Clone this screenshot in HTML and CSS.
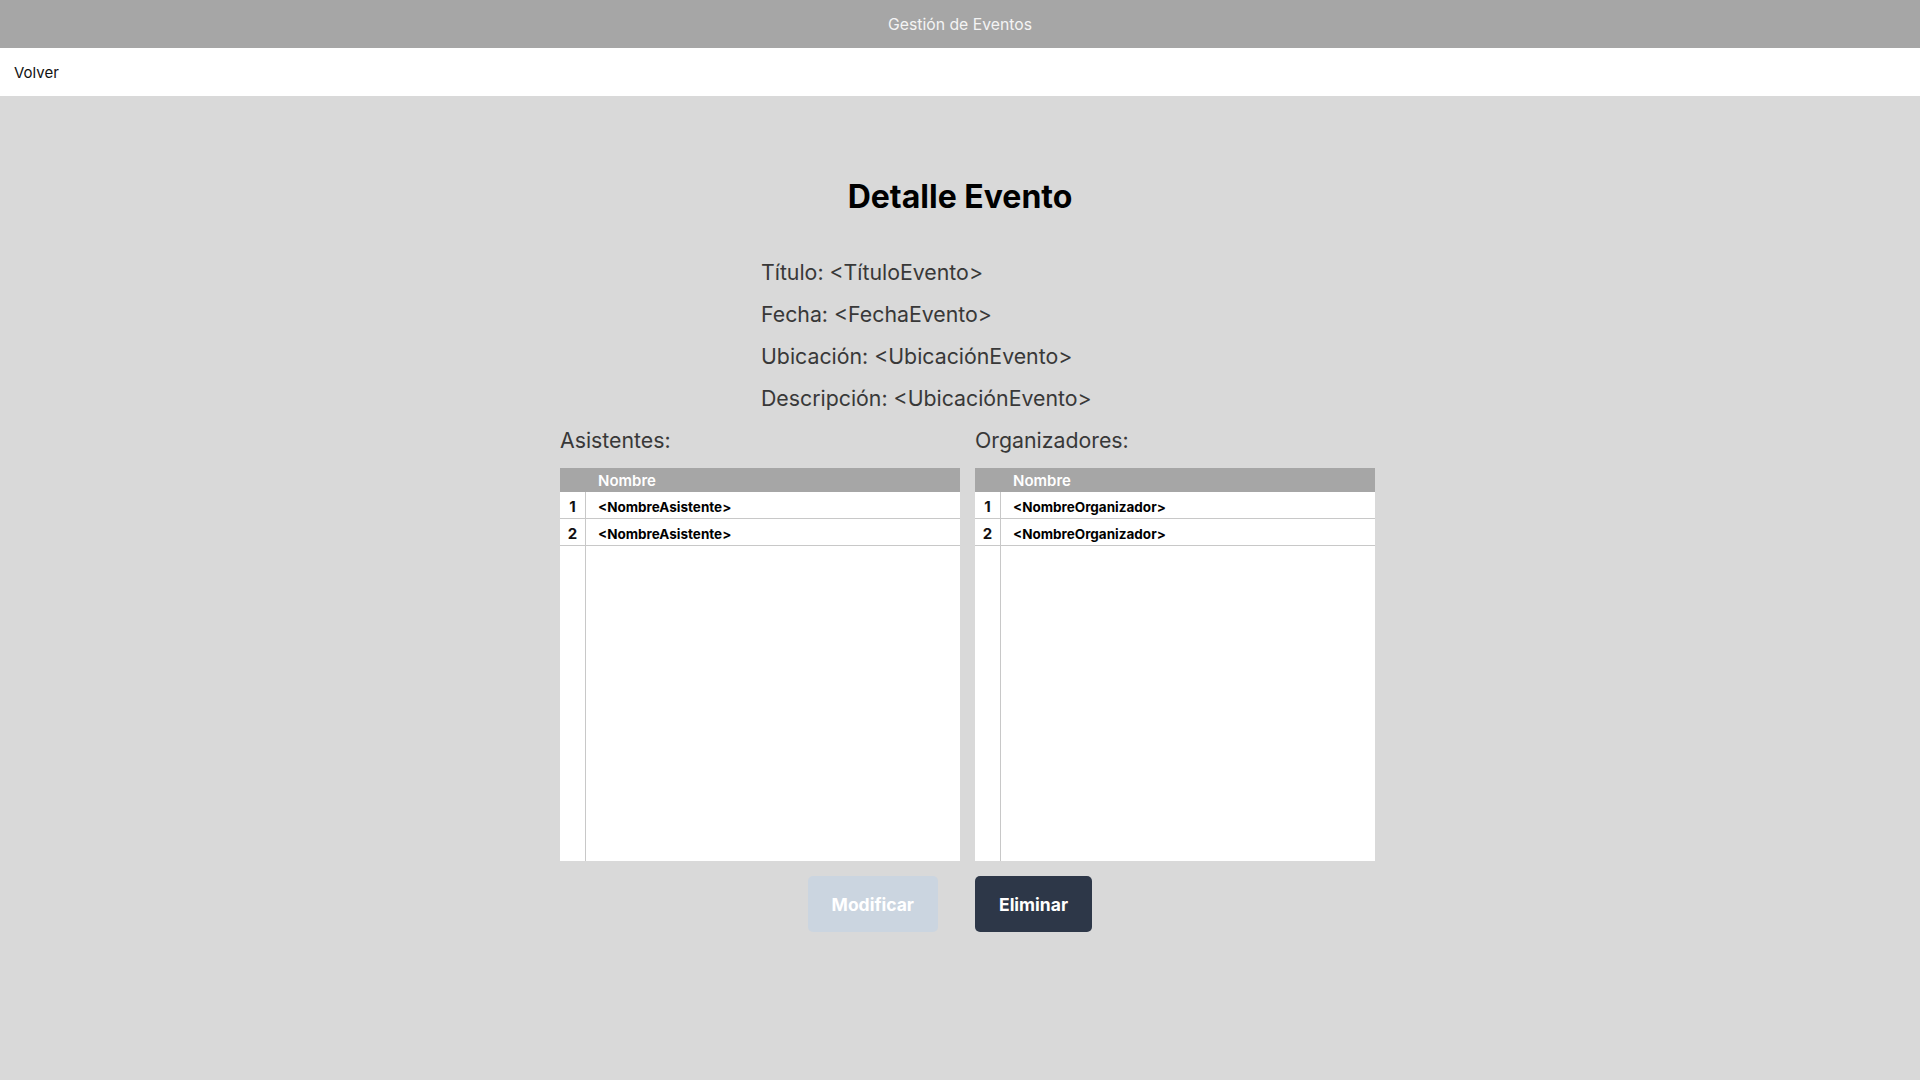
FILE: index.html
```html
<!DOCTYPE html>
<html lang="es">
<head>
<meta charset="utf-8">
<title>Gestión de Eventos</title>
<link rel="stylesheet" href="styles.css">
</head>
<body>
<header class="topbar">Gestión de Eventos</header>
<nav class="navbar"><a class="back" href="#">Volver</a></nav>
<main class="main">
  <h1 class="title">Detalle Evento</h1>
  <div class="content">
    <div class="info">
      <p class="line">Título: &lt;TítuloEvento&gt;</p>
      <p class="line">Fecha: &lt;FechaEvento&gt;</p>
      <p class="line">Ubicación: &lt;UbicaciónEvento&gt;</p>
      <p class="line">Descripción: &lt;UbicaciónEvento&gt;</p>
    </div>
    <div class="columns">
      <section class="col">
        <p class="line">Asistentes:</p>
        <div class="grid">
          <div class="row head"><div class="num"></div><div class="name">Nombre</div></div>
          <div class="row"><div class="num">1</div><div class="name">&lt;NombreAsistente&gt;</div></div>
          <div class="row"><div class="num">2</div><div class="name">&lt;NombreAsistente&gt;</div></div>
          <div class="row filler"><div class="num"></div><div class="name"></div></div>
        </div>
      </section>
      <section class="col">
        <p class="line">Organizadores:</p>
        <div class="grid">
          <div class="row head"><div class="num"></div><div class="name">Nombre</div></div>
          <div class="row"><div class="num">1</div><div class="name">&lt;NombreOrganizador&gt;</div></div>
          <div class="row"><div class="num">2</div><div class="name">&lt;NombreOrganizador&gt;</div></div>
          <div class="row filler"><div class="num"></div><div class="name"></div></div>
        </div>
      </section>
    </div>
    <div class="actions">
      <div class="act left"><button class="btn btn-disabled" disabled>Modificar</button></div>
      <div class="act right"><button class="btn btn-dark">Eliminar</button></div>
    </div>
  </div>
</main>
</body>
</html>
```
FILE: styles.css
```css
* { box-sizing: border-box; }
html, body { margin: 0; padding: 0; }
body {
  font-family: Inter, "Noto Sans", sans-serif;
  background: #d9d9d9;
  min-height: 1080px;
}
.topbar {
  height: 48px;
  background: #a6a6a6;
  color: #f4f4f4;
  font-size: 15.75px;
  display: flex;
  align-items: center;
  justify-content: center;
}
.navbar {
  height: 48px;
  background: #ffffff;
  display: flex;
  align-items: center;
  padding-left: 14px;
}
.back {
  color: #111;
  text-decoration: none;
  font-size: 15px;
}
.main {
  background: #d9d9d9;
  padding-top: 83px;
}
.title {
  margin: 0;
  text-align: center;
  font-size: 32px;
  line-height: 36px;
  font-weight: 700;
  color: #000;
}
.content {
  width: 815px;
  margin-left: calc(50% - 400px);
  margin-top: 36px;
}
.info {
  padding-left: 201px;
}
.line {
  margin: 0;
  font-size: 21.3px;
  line-height: 42px;
  color: #383838;
}
.columns {
  display: flex;
  gap: 15px;
}
.col {
  width: 400px;
}
.col .line { margin-bottom: 7px; }
.grid {
  background: #fff;
  height: 393px;
  display: flex;
  flex-direction: column;
}
.row {
  display: flex;
  height: 27px;
  border-bottom: 1px solid #c8c8c8;
}
.row.head {
  height: 24px;
  background: #a6a6a6;
  border-bottom: none;
  color: #fff;
}
.row.filler { flex: 1; border-bottom: none; }
.num {
  width: 26px;
  flex: none;
  border-right: 1px solid #c8c8c8;
  font-size: 15px;
  font-weight: 700;
  display: flex;
  align-items: center;
  justify-content: center;
  color: #111;
  padding-top: 2px;
}
.head .num { border-right: none; padding-top: 0; }
.name {
  flex: 1;
  padding-left: 12px;
  padding-top: 3px;
  display: flex;
  align-items: center;
  font-size: 13.5px;
  font-weight: 700;
  color: #000;
}
.head .name {
  font-size: 15px;
  font-weight: 600;
  color: #fff;
  padding-top: 1px;
}
.actions {
  display: flex;
  gap: 15px;
  margin-top: 15px;
}
.act { width: 400px; display: flex; }
.act.left { justify-content: flex-end; padding-right: 22px; }
.act.right { justify-content: flex-start; }
.btn {
  height: 56px;
  padding: 0 24px;
  border: none;
  border-radius: 5px;
  font-family: Inter, "Noto Sans", sans-serif;
  font-size: 17.5px;
  font-weight: 700;
  color: #fff;
}
.btn-disabled { background: #cbd5e0; }
.btn-dark { background: #2d3748; }
```
